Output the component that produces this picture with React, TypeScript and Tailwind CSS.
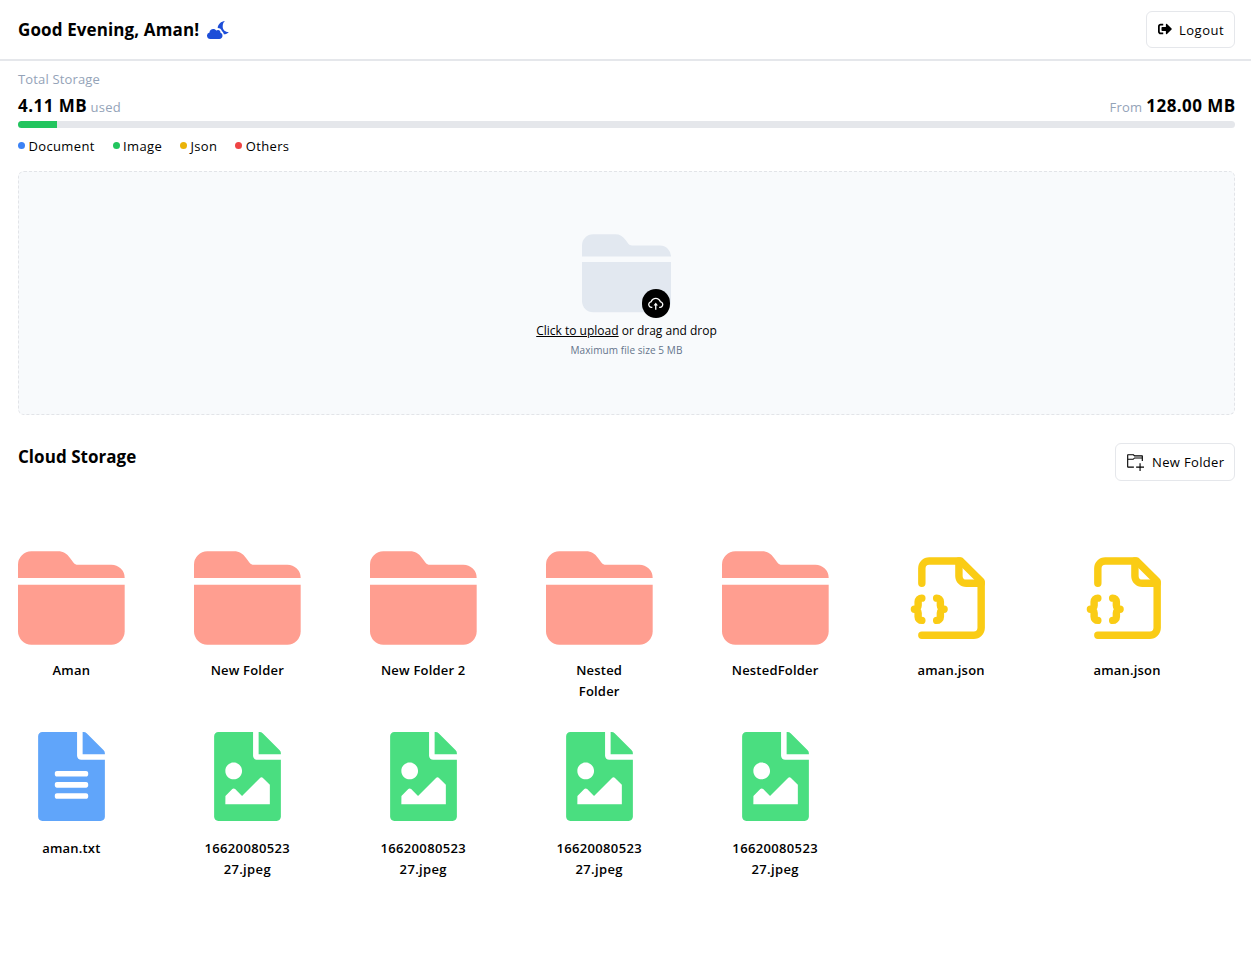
import React from "react";
import { FaFileAlt, FaFileImage, FaSignOutAlt } from "react-icons/fa";
import { VscNewFolder } from "react-icons/vsc";
import { AiOutlineCloudUpload } from "react-icons/ai";

function CloudMoon({ className }: { className: string }) {
  return (
    <svg viewBox="0 0 22 18" fill="currentColor" className={className}>
      <path d="M3.3 18A3.3 3.3 0 0 1 2.5 11.5C2.5 9.3 4.3 8 6.2 8C7.6 8 8.7 8.6 9.3 9.6C9.8 9.2 10.3 9 11 9C12.6 9 13.6 10.2 13.5 11.8C14.8 12.2 15.5 13.3 15.5 14.7C15.5 16.6 14.2 18 12.3 18Z" />
      <path d="M18 0C14 .3 11 3.2 10.7 7C12.8 7 14.5 8.2 15 10.3C15.9 10.9 16.6 12 16.8 13.3C18.8 13.3 20.6 12.5 21.8 11C18 11.3 15.7 8.8 15.7 5.5C15.7 3.2 16.4 1.2 18 0Z" />
    </svg>
  );
}

function Folder({ className }: { className: string }) {
  return (
    <svg viewBox="0 0.08 24 24" fill="currentColor" className={className}>
      <path d="M0 7.5V4.5a3 3 0 0 1 3-3h6c1.2 0 2 .55 2.7 1.5l.8 1.05c.3.35.5.45 1 .45H21a3 3 0 0 1 3 3z" />
      <path d="M0 9h24v10.5a3 3 0 0 1-3 3H3a3 3 0 0 1-3-3z" />
    </svg>
  );
}

function JsonFile({ className }: { className: string }) {
  return (
    <svg viewBox="0 0.1 24 24" fill="none" stroke="currentColor" strokeWidth="2" strokeLinecap="round" strokeLinejoin="round" className={className}>
      <path d="M4 22h14a2 2 0 0 0 2-2V7.5L14.5 2H6a2 2 0 0 0-2 2v4" />
      <path d="M14 2v4a2 2 0 0 0 2 2h4" />
      <path d="M4 12a1 1 0 0 0-1 1v1a1 1 0 0 1-1 1 1 1 0 0 1 1 1v1a1 1 0 0 0 1 1" />
      <path d="M8 18a1 1 0 0 0 1-1v-1a1 1 0 0 1 1-1 1 1 0 0 1-1-1v-1a1 1 0 0 0-1-1" />
    </svg>
  );
}

type Kind = "folder" | "json" | "text" | "image";

const items: { kind: Kind; name: string }[] = [
  { kind: "folder", name: "Aman" },
  { kind: "folder", name: "New Folder" },
  { kind: "folder", name: "New Folder 2" },
  { kind: "folder", name: "Nested Folder" },
  { kind: "folder", name: "NestedFolder" },
  { kind: "json", name: "aman.json" },
  { kind: "json", name: "aman.json" },
  { kind: "text", name: "aman.txt" },
  { kind: "image", name: "1662008052327.jpeg" },
  { kind: "image", name: "1662008052327.jpeg" },
  { kind: "image", name: "1662008052327.jpeg" },
  { kind: "image", name: "1662008052327.jpeg" },
];

function ItemIcon({ kind }: { kind: Kind }) {
  if (kind === "folder") return <Folder className="size-[106.7px] text-[#ff9e90]" />;
  if (kind === "json") return <JsonFile className="size-[89px] text-[#facc15]" />;
  if (kind === "text") return <FaFileAlt className="size-[89px] text-[#60a5fa]" />;
  return <FaFileImage className="size-[89px] text-[#4ade80]" />;
}

const legend = [
  { label: "Document", dot: "bg-[#3b82f6]" },
  { label: "Image", dot: "bg-[#22c55e]" },
  { label: "Json", dot: "bg-[#eab308]" },
  { label: "Others", dot: "bg-[#ef4444]" },
];

export default function App() {
  return (
    <div className="min-h-[970px] bg-white font-['Open_Sans','Noto_Sans',sans-serif] text-[13px] tracking-[0.25px] text-black">
      <header className="flex h-[60.5px] items-center justify-between border-b-2 border-[#e5e7eb] pr-4 pl-[18px]">
        <h1 className="flex items-center gap-[8px] text-[17px] font-bold tracking-[0.12px]">
          Good Evening, Aman!
          <CloudMoon className="mt-[1px] h-[18px] w-[22px] text-[#1d4ed8]" />
        </h1>
        <button className="flex h-[37px] w-[89px] items-center gap-[7px] rounded-md border border-[#e5e7eb] pl-[11px]">
          <FaSignOutAlt className="size-[14px]" />
          <span className="pt-[2px] tracking-[0.5px]">Logout</span>
        </button>
      </header>

      <main className="pr-4 pl-[18px]">
        <section className="h-[110px]">
          <p className="pt-2 leading-5 tracking-[0.15px] text-[#94a3b8]">Total Storage</p>
          <div className="mt-[3px] flex h-[28px] items-center justify-between">
            <p className="flex items-baseline gap-[3.5px]">
              <b className="text-[17px] tracking-[0.45px]">4.11 MB</b>
              <span className="text-[#94a3b8]">used</span>
            </p>
            <p className="flex items-baseline gap-1">
              <span className="text-[#94a3b8]">From</span>
              <b className="-mr-[0.7px] text-[17px] tracking-[0.45px]">128.00 MB</b>
            </p>
          </div>
          <div className="mt-[1px] h-[7px] overflow-hidden rounded-full bg-[#e5e7eb]">
            <div className="h-full w-[39px] bg-[#22c55e]" />
          </div>
          <ul className="mt-2 flex gap-[17.9px] leading-5 tracking-[0.35px]">
            {legend.map((l) => (
              <li key={l.label} className="flex items-center gap-[3.5px]">
                <span className={`size-[7px] rounded-full ${l.dot}`} />
                {l.label}
              </li>
            ))}
          </ul>
        </section>

        <section className="flex h-[244px] flex-col items-center rounded-md border border-dashed border-[#e2e4e8] bg-[#f8fafc] pt-[57px]">
          <div className="relative">
            <Folder className="size-[89px] text-[#e2e8f0]" />
            <span className="absolute right-[1px] bottom-0 flex size-[28.5px] items-center justify-center rounded-full bg-black">
              <AiOutlineCloudUpload className="size-[17.5px] text-white" />
            </span>
          </div>
          <p className="mt-[4.5px] text-[12px] leading-[18px] tracking-normal">
            <span className="underline">Click to upload</span> or drag and drop
          </p>
          <p className="mt-[0.5px] text-[10px] leading-[18px] tracking-[0.08px] text-[#64748b]">Maximum file size 5 MB</p>
        </section>

        <section>
          <div className="mt-7 flex justify-between">
            <h2 className="text-[17px] leading-[27px] font-bold tracking-[0.04px]">Cloud Storage</h2>
            <button className="flex h-[38px] w-[120px] items-center gap-[8px] rounded-md border border-[#e5e7eb] pl-[10px]">
              <VscNewFolder className="size-[18px]" />
              <span className="pt-[2px] tracking-[0.35px]">New Folder</span>
            </button>
          </div>
          <div className="mt-[64px] flex flex-wrap gap-x-[69.28px]">
            {items.map((item, i) => (
              <div key={i} className="flex h-[178px] w-[106.7px] flex-col items-center">
                <div className="flex h-[107px] items-center justify-center">
                  <ItemIcon kind={item.kind} />
                </div>
                <p
                  className={`mt-[8px] w-[89px] text-center text-[13px] leading-[21px] font-semibold break-words ${
                    item.kind === "image" ? "tracking-[0.35px]" : "tracking-[0.2px]"
                  }`}
                >
                  {item.name}
                </p>
              </div>
            ))}
          </div>
        </section>
      </main>
    </div>
  );
}
